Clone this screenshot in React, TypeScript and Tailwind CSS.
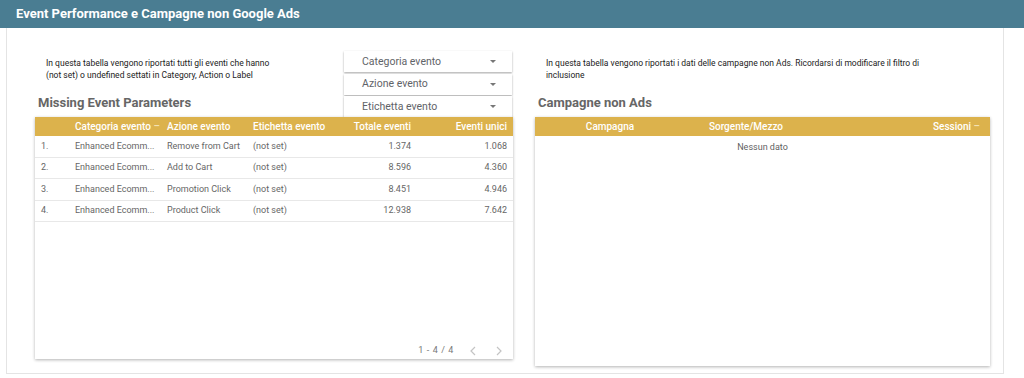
import React from "react";

const rows = [
  { n: "1.", cat: "Enhanced Ecomm...", az: "Remove from Cart", et: "(not set)", tot: "1.374", un: "1.068" },
  { n: "2.", cat: "Enhanced Ecomm...", az: "Add to Cart", et: "(not set)", tot: "8.596", un: "4.360" },
  { n: "3.", cat: "Enhanced Ecomm...", az: "Promotion Click", et: "(not set)", tot: "8.451", un: "4.946" },
  { n: "4.", cat: "Enhanced Ecomm...", az: "Product Click", et: "(not set)", tot: "12.938", un: "7.642" },
];

function Dropdown({ label }: { label: string }) {
  return (
    <div className="flex h-[21px] w-[168px] items-center justify-between bg-white pl-[18px] pr-[16px] text-[10.5px] text-[#5f6368] shadow-[0_1px_2px_rgba(0,0,0,0.35)]">
      <span>{label}</span>
      <svg width="6" height="3" viewBox="0 0 6 3"><path d="M0 0h6L3 3z" fill="#777" /></svg>
    </div>
  );
}

export default function App() {
  return (
    <div className="h-[378px] w-[1024px] bg-white font-['Roboto',sans-serif]">
      <div className="flex h-[28px] items-center bg-[#4a7d92] pl-[16px] text-[13px] font-bold text-white">
        Event Performance e Campagne non Google Ads
      </div>
      <div className="ml-[6px] flex h-[346px] w-[998px] border-x border-b border-[#e4e4e4] pl-[28px] pr-[13px] pt-[23px]">
        {/* Left column */}
        <div className="flex w-[478px] flex-col">
          <div className="flex h-[66px]">
            <div className="flex flex-1 flex-col justify-between">
              <div className="pl-[11px] pt-[6px] text-[8.5px] leading-[12px] text-[#222]">
                In questa tabella vengono riportati tutti gli eventi che hanno
                <br />
                (not set) o undefined settati in Category, Action o Label
              </div>
              <div className="pb-[6px] pl-[3px] text-[13px] font-bold leading-[16px] text-[#666]">
                Missing Event Parameters
              </div>
            </div>
            <div className="mr-px flex flex-col gap-[1.5px]">
              <Dropdown label="Categoria evento" />
              <Dropdown label="Azione evento" />
              <Dropdown label="Etichetta evento" />
            </div>
          </div>
          <div className="flex h-[242px] flex-col bg-white shadow-[0_1px_3px_rgba(0,0,0,0.3)]">
            <div className="flex h-[19px] shrink-0 items-center bg-[#dcb24c] text-[10px] font-medium text-white">
              <div className="w-[40px]" />
              <div className="w-[92px]">
                Categoria evento <span className="text-[#f3e2b3]">–</span>
              </div>
              <div className="w-[86px]">Azione evento</div>
              <div className="w-[80px]">Etichetta evento</div>
              <div className="w-[78px] text-right">Totale eventi</div>
              <div className="w-[96px] text-right">Eventi unici</div>
            </div>
            {rows.map((r) => (
              <div key={r.n} className="flex h-[21.5px] shrink-0 items-center border-b border-[#e8e8e8] text-[9px] text-[#666]">
                <div className="w-[40px] pl-[6px]">{r.n}</div>
                <div className="w-[92px]">{r.cat}</div>
                <div className="w-[86px]">{r.az}</div>
                <div className="w-[80px]">{r.et}</div>
                <div className="w-[78px] text-right">{r.tot}</div>
                <div className="w-[96px] text-right">{r.un}</div>
              </div>
            ))}
            <div className="flex-1" />
            <div className="flex h-[20px] shrink-0 items-center justify-end pr-[11px] pt-[3px] text-[9px] text-[#777]">
              <span className="mr-[16px] tracking-[0.6px]">1 - 4 / 4</span>
              <svg className="mr-[20px]" width="6" height="10" viewBox="0 0 6 10"><path d="M5 1L1 5l4 4" stroke="#c4c4c4" fill="none" strokeWidth="1.2" /></svg>
              <svg width="6" height="10" viewBox="0 0 6 10"><path d="M1 1l4 4-4 4" stroke="#c4c4c4" fill="none" strokeWidth="1.2" /></svg>
            </div>
          </div>
        </div>
        <div className="w-[22px]" />
        {/* Right column */}
        <div className="flex w-[455px] flex-col">
          <div className="flex h-[66px] flex-col justify-between">
            <div className="pl-[11px] pt-[6px] text-[8.5px] leading-[12px] text-[#222]">
              In questa tabella vengono riportati i dati delle campagne non Ads. Ricordarsi di modificare il filtro di
              <br />
              inclusione
            </div>
            <div className="pb-[6px] pl-[3px] text-[13px] font-bold leading-[16px] text-[#666]">Campagne non Ads</div>
          </div>
          <div className="flex h-[249px] flex-col bg-white shadow-[0_1px_3px_rgba(0,0,0,0.3)]">
            <div className="flex h-[19px] shrink-0 items-center bg-[#dcb24c] text-[10px] font-medium text-white">
              <div className="w-[150px] text-center">Campagna</div>
              <div className="w-[122px] text-center">Sorgente/Mezzo</div>
              <div className="flex-1 pr-[10px] text-right">
                Sessioni <span className="text-[#f3e2b3]">–</span>
              </div>
            </div>
            <div className="flex h-[22px] items-center justify-center pt-px text-[9px] text-[#5f5f5f]">Nessun dato</div>
          </div>
        </div>
      </div>
    </div>
  );
}
